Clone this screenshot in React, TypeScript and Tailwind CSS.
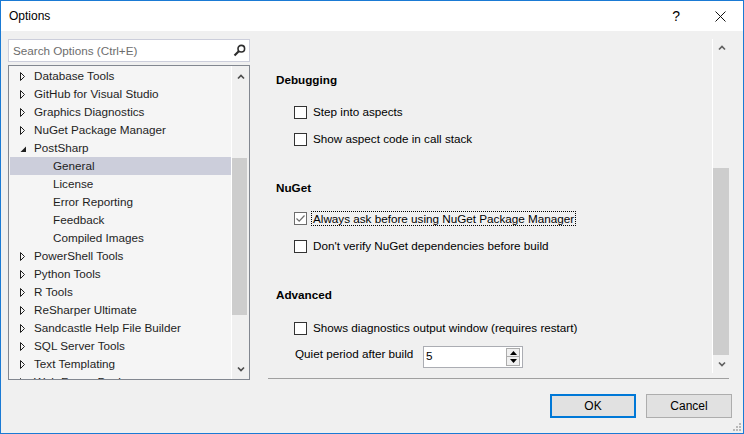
import React from "react";

type Node = { label: string; kind: "closed" | "open" | "leaf"; selected?: boolean };

const tree: Node[] = [
  { label: "Database Tools", kind: "closed" },
  { label: "GitHub for Visual Studio", kind: "closed" },
  { label: "Graphics Diagnostics", kind: "closed" },
  { label: "NuGet Package Manager", kind: "closed" },
  { label: "PostSharp", kind: "open" },
  { label: "General", kind: "leaf", selected: true },
  { label: "License", kind: "leaf" },
  { label: "Error Reporting", kind: "leaf" },
  { label: "Feedback", kind: "leaf" },
  { label: "Compiled Images", kind: "leaf" },
  { label: "PowerShell Tools", kind: "closed" },
  { label: "Python Tools", kind: "closed" },
  { label: "R Tools", kind: "closed" },
  { label: "ReSharper Ultimate", kind: "closed" },
  { label: "Sandcastle Help File Builder", kind: "closed" },
  { label: "SQL Server Tools", kind: "closed" },
  { label: "Text Templating", kind: "closed" },
  { label: "Web Forms Designer", kind: "closed" },
];

function Chevron({ down, color = "#5a5a5a" }: { down?: boolean; color?: string }) {
  return (
    <svg width="8" height="6" viewBox="0 0 8 6">
      <path
        d={down ? "M1 1.5 L4 4.5 L7 1.5" : "M1 4.5 L4 1.5 L7 4.5"}
        fill="none"
        stroke={color}
        strokeWidth="1.7"
      />
    </svg>
  );
}

function TreeRow({ node }: { node: Node }) {
  const leaf = node.kind === "leaf";
  return (
    <div
      className={`h-[18px] flex items-center whitespace-nowrap ${
        leaf ? "pl-[43px]" : "pl-[10px]"
      } ${node.selected ? "bg-[#cccedb]" : ""}`}
    >
      {node.kind === "closed" && (
        <svg width="6" height="9" viewBox="0 0 6 9" className="mr-[8px]">
          <path d="M0.5 0.5 L4.5 4.5 L0.5 8.5 Z" fill="none" stroke="#1e1e1e" strokeWidth="1" />
        </svg>
      )}
      {node.kind === "open" && (
        <svg width="6" height="9" viewBox="0 0 6 9" className="mr-[8px]">
          <path d="M6 2.5 L6 8 L0.5 8 Z" fill="#1e1e1e" />
        </svg>
      )}
      <span>{node.label}</span>
    </div>
  );
}

function CheckRow({
  label,
  checked,
  focused,
  className,
}: {
  label: string;
  checked?: boolean;
  focused?: boolean;
  className?: string;
}) {
  return (
    <div className={`h-[16px] flex items-center pl-[26px] gap-[6px] ${className ?? ""}`}>
      <div
        className={`w-[13px] h-[13px] border bg-white flex items-center justify-center ${
          checked ? "border-[#6d6d6d]" : "border-[#333333]"
        }`}
      >
        {checked && (
          <svg width="11" height="11" viewBox="0 0 11 11">
            <path d="M1.5 5.5 L4.2 8.2 L9.5 2.5" fill="none" stroke="#6d6d6d" strokeWidth="1.2" />
          </svg>
        )}
      </div>
      {focused ? (
        <span className="-ml-[2px] px-[1px] leading-[13px] border border-dotted border-black whitespace-nowrap">
          {label}
        </span>
      ) : (
        <span className="whitespace-nowrap">{label}</span>
      )}
    </div>
  );
}

export default function App() {
  return (
    <div className="w-[744px] h-[434px] border border-[#1a7ad4] flex flex-col bg-[#f0f0f0] font-['Liberation_Sans',Arial,sans-serif] text-[11.7px] leading-[16px] text-black overflow-hidden">
      {/* title bar */}
      <div className="h-[30px] shrink-0 bg-white flex items-center pl-[8px]">
        <span className="flex-1 text-[12px]">Options</span>
        <span className="text-[14px] mr-[35px]">?</span>
        <svg width="11" height="11" viewBox="0 0 11 11" className="mr-[17px]">
          <path d="M0.5 0.5 L10.5 10.5 M10.5 0.5 L0.5 10.5" stroke="#111" strokeWidth="1" />
        </svg>
      </div>

      <div className="flex">
        {/* left column */}
        <div className="ml-[7px] w-[242px] pt-[8px] shrink-0">
          <div className="h-[23px] border border-[#cccedb] bg-white flex items-center pl-[4px] pr-[3px]">
            <span className="flex-1 text-[#6d6d6d]">Search Options (Ctrl+E)</span>
            <svg width="13" height="13" viewBox="0 0 13 13">
              <circle cx="8.3" cy="4.7" r="3.3" fill="none" stroke="#2d2d2d" strokeWidth="1.6" />
              <path d="M6 7 L1.5 11.5" stroke="#2d2d2d" strokeWidth="2.2" />
            </svg>
          </div>
          <div className="mt-[3px] h-[315px] border border-[#828790] bg-[#f5f5f5] flex text-[#1e1e1e]">
            <div className="flex-1 pt-[1px] pl-[1px] overflow-hidden">
              {tree.map((n) => (
                <TreeRow key={n.label} node={n} />
              ))}
            </div>
            <div className="w-px bg-white" />
            <div className="w-[17px] bg-[#f0f0f0] flex flex-col">
              <div className="h-[21px] flex items-center justify-center pt-[1px]">
                <Chevron color="#4d4d4d" />
              </div>
              <div className="mt-[71px] h-[157px] w-[15px] bg-[#cdcdcd]" />
              <div className="flex-1" />
              <div className="h-[20px] flex items-center justify-center pl-[1px]">
                <Chevron down color="#4d4d4d" />
              </div>
            </div>
          </div>
        </div>

        {/* right column */}
        <div className="ml-[18px] w-[462px] pt-[8px]">
          <div className="h-[334px] flex">
            <div className="flex-1 overflow-hidden flex flex-col">
              <div className="mt-[33px] pl-[8px] font-bold">Debugging</div>
              <CheckRow className="mt-[16px]" label="Step into aspects" />
              <CheckRow className="mt-[11px]" label="Show aspect code in call stack" />

              <div className="mt-[33px] pl-[8px] font-bold">NuGet</div>
              <CheckRow
                className="mt-[14px]"
                label="Always ask before using NuGet Package Manager"
                checked
                focused
              />
              <CheckRow className="mt-[12px]" label="Don't verify NuGet dependencies before build" />

              <div className="mt-[33px] pl-[8px] font-bold">Advanced</div>
              <CheckRow className="mt-[17px]" label="Shows diagnostics output window (requires restart)" />

              <div className="mt-[10px] flex items-start pl-[27px]">
                <span className="w-[128px] whitespace-nowrap">Quiet period after build</span>
                <div className="w-[100px] h-[22px] border border-[#abadb3] bg-white flex items-start">
                  <span className="flex-1 pl-[2px] pt-[1px]">5</span>
                  <div className="mr-[2px] mt-[1px] w-[14px] flex flex-col">
                    <div className="h-[9px] border border-[#acacac] bg-[#f0f0f0] flex items-center justify-center">
                      <svg width="7" height="4" viewBox="0 0 7 4">
                        <path d="M0 4 L3.5 0 L7 4 Z" fill="#000" />
                      </svg>
                    </div>
                    <div className="h-[9px] border border-t-0 border-[#acacac] bg-[#f0f0f0] flex items-center justify-center">
                      <svg width="7" height="4" viewBox="0 0 7 4">
                        <path d="M0 0 L3.5 4 L7 0 Z" fill="#000" />
                      </svg>
                    </div>
                  </div>
                </div>
              </div>
            </div>
            <div className="w-px bg-white" />
            <div className="w-[17px] flex flex-col">
              <div className="h-[18px] flex items-center justify-center">
                <Chevron color="#606060" />
              </div>
              <div className="mt-[111px] h-[187px] w-[16px] bg-[#cdcdcd]" />
              <div className="h-[18px] flex items-center justify-center">
                <Chevron down color="#606060" />
              </div>
            </div>
          </div>
          <div className="mt-[5px] h-px w-[461px] bg-[#a0a0a0]" />
        </div>
      </div>

      {/* buttons */}
      <div className="mt-[14px] flex justify-end gap-[10px] pr-[11px]">
        <button className="w-[86px] h-[24px] border-2 border-[#0078d7] bg-[#e1e1e1] text-black text-[12px]">OK</button>
        <button className="w-[86px] h-[24px] border border-[#adadad] bg-[#e1e1e1] text-black text-[12px]">Cancel</button>
      </div>
      <div className="flex-1 flex items-end justify-end pr-[2px] pb-[2px]">
        <svg width="8" height="8" viewBox="0 0 8 8">
          <rect x="6" y="0" width="2" height="2" fill="#b8b8b8" />
          <rect x="3" y="3" width="2" height="2" fill="#b8b8b8" />
          <rect x="6" y="3" width="2" height="2" fill="#b8b8b8" />
          <rect x="0" y="6" width="2" height="2" fill="#b8b8b8" />
          <rect x="3" y="6" width="2" height="2" fill="#b8b8b8" />
          <rect x="6" y="6" width="2" height="2" fill="#b8b8b8" />
        </svg>
      </div>
    </div>
  );
}
